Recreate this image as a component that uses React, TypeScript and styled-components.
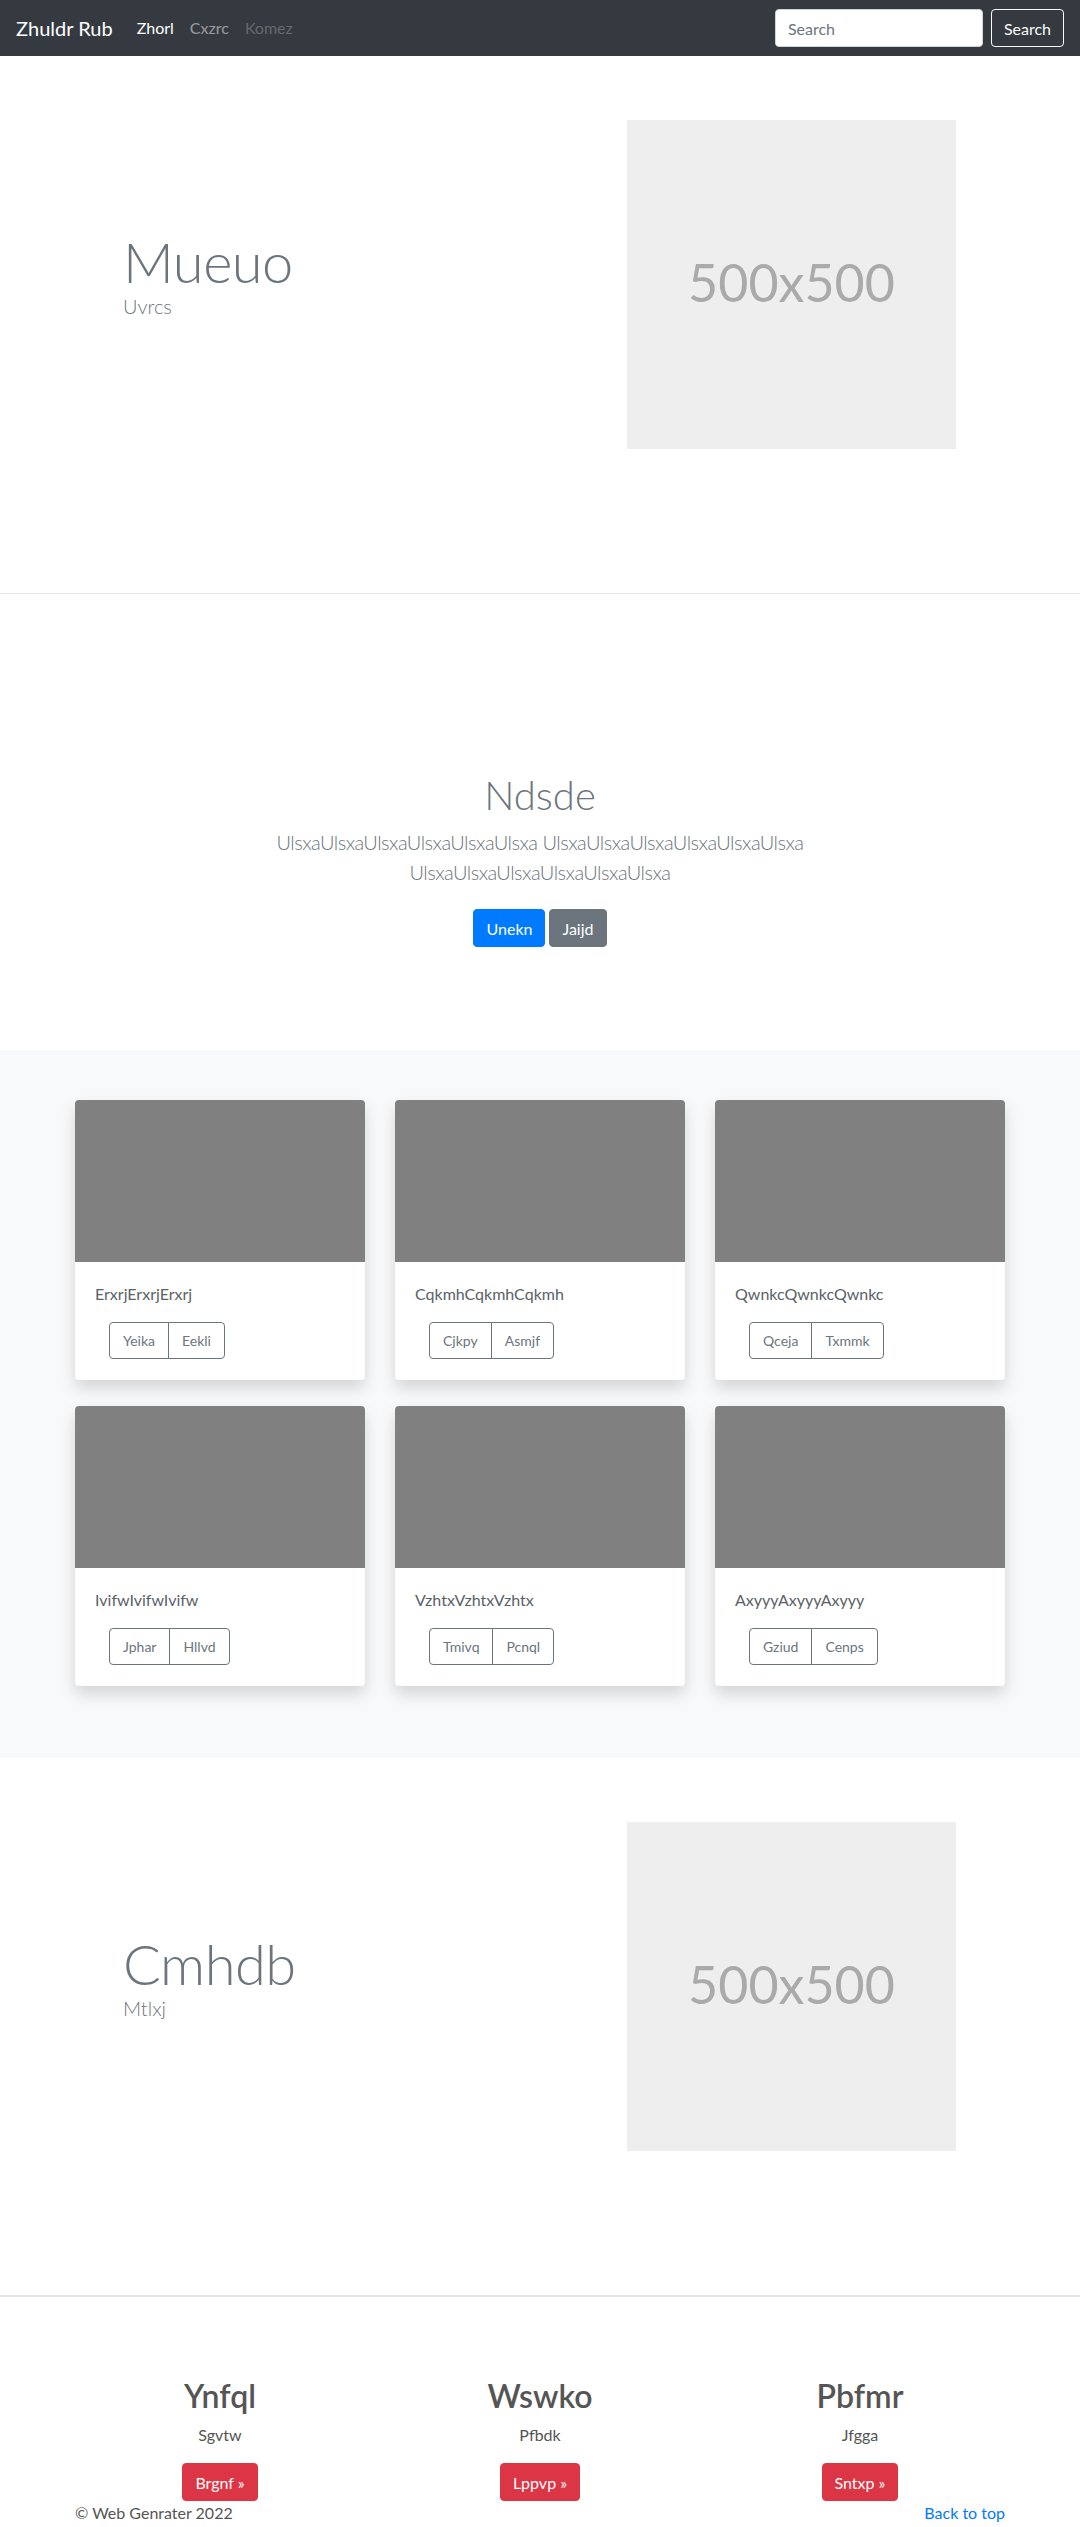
import React from "react";
import styled, { createGlobalStyle } from "styled-components";

const GlobalStyle = createGlobalStyle`
  * { box-sizing: border-box; }
  body {
    margin: 0;
    font-family: Lato, "Open Sans", "Noto Sans", sans-serif;
    font-size: 16px;
    line-height: 1.5;
    color: #212529;
    background: #fff;
  }
`;

const Navbar = styled.nav`
  height: 56px;
  background: #343a40;
  display: flex;
  align-items: center;
  padding: 0 16px;
`;

const Brand = styled.a`
  color: #fff;
  font-size: 20px;
  line-height: 30px;
  margin-right: 16px;
  text-decoration: none;
`;

const NavLink = styled.a<{ $state: "active" | "normal" | "disabled" }>`
  padding: 8px;
  font-size: 16px;
  text-decoration: none;
  color: ${(p) =>
    p.$state === "active"
      ? "#fff"
      : p.$state === "normal"
      ? "rgba(255,255,255,0.5)"
      : "rgba(255,255,255,0.25)"};
`;

const SearchForm = styled.form`
  margin-left: auto;
  display: flex;
  align-items: center;
  gap: 8px;
`;

const SearchInput = styled.input`
  width: 208px;
  height: 38px;
  padding: 6px 12px;
  font-family: inherit;
  font-size: 16px;
  border: 1px solid #ced4da;
  border-radius: 4px;
  color: #495057;
  &::placeholder { color: #6c757d; }
`;

const OutlineLightButton = styled.button`
  height: 38px;
  padding: 6px 12px;
  font-family: inherit;
  font-size: 16px;
  color: #f8f9fa;
  background: transparent;
  border: 1px solid #f8f9fa;
  border-radius: 4px;
`;

const Container = styled.div`
  max-width: 960px;
  margin: 0 auto;
  padding: 0 15px;
`;

const HeroSection = styled.section`
  padding: 64px 0 144px;
  border-bottom: 1px solid #e5e5e5;
`;

const HeroRow = styled.div`
  display: flex;
  align-items: center;
`;

const HeroText = styled.div`
  flex: 0 0 465px;
  padding-left: 48px;
`;

const HeroTitle = styled.h1`
  margin: 0;
  font-size: 56px;
  font-weight: 300;
  line-height: 1.2;
  color: #6c757d;
  letter-spacing: -0.5px;
`;

const HeroLead = styled.p`
  margin: -4px 0 20px;
  font-size: 20px;
  font-weight: 300;
  color: #6c757d;
`;

const HeroImageCol = styled.div`
  flex: 1;
  padding-left: 87px;
`;

const Placeholder = styled.div`
  width: 329px;
  height: 329px;
  background: #eee;
  display: flex;
  align-items: center;
  justify-content: center;
  color: #aaa;
  font-size: 52px;
  padding-bottom: 6px;
`;

const IntroSection = styled.section`
  padding: 177px 0 103px;
  text-align: center;
`;

const IntroTitle = styled.h1`
  margin: 0 0 8px;
  font-size: 40px;
  font-weight: 300;
  line-height: 1.2;
  color: #6c757d;
`;

const IntroLead = styled.p`
  max-width: 610px;
  margin: 0 auto 22px;
  font-size: 20px;
  font-weight: 300;
  line-height: 30px;
  letter-spacing: -0.5px;
  color: #6c757d;
`;

const ButtonRow = styled.div`
  display: flex;
  justify-content: center;
  gap: 4px;
`;

const SolidButton = styled.button<{ $bg: string }>`
  height: 38px;
  padding: 6px 12px;
  font-family: inherit;
  font-size: 16px;
  color: #fff;
  background: ${(p) => p.$bg};
  border: 1px solid ${(p) => p.$bg};
  border-radius: 4px;
`;

const AlbumSection = styled.section`
  background: #f8f9fa;
  padding: 50px 0 72px;
`;

const CardGrid = styled.div`
  display: grid;
  grid-template-columns: repeat(3, 1fr);
  column-gap: 30px;
  row-gap: 26px;
`;

const Card = styled.div`
  background: #fff;
  border-radius: 4px;
  overflow: hidden;
  box-shadow: 0 8px 16px rgba(0, 0, 0, 0.15);
`;

const CardImage = styled.div`
  height: 162px;
  background: #808080;
`;

const CardBody = styled.div`
  padding: 20px 20px 21px;
`;

const CardText = styled.p`
  margin: 0 0 16px;
  color: #5a6268;
  font-size: 16px;
`;

const BtnGroup = styled.div`
  display: inline-flex;
  margin-left: 14px;
`;

const GroupButton = styled.button`
  height: 37px;
  padding: 0 13px;
  font-family: inherit;
  font-size: 14px;
  color: #6c757d;
  background: transparent;
  border: 1px solid #6c757d;
  &:first-child { border-radius: 4px 0 0 4px; }
  &:last-child { border-radius: 0 4px 4px 0; margin-left: -1px; }
`;

const MarketingSection = styled.section`
  border-top: 1px solid #e5e5e5;
  padding-top: 80px;
`;

const MarketingGrid = styled.div`
  display: grid;
  grid-template-columns: repeat(3, 1fr);
  column-gap: 30px;
  text-align: center;
`;

const MarketingTitle = styled.h2`
  margin: 0 0 8px;
  font-size: 32px;
  font-weight: 600;
  line-height: 1.2;
  color: #555;
`;

const MarketingText = styled.p`
  margin: 0 0 16px;
  color: #555;
`;

const Footer = styled.footer`
  display: flex;
  justify-content: space-between;
  color: #555;
  padding-bottom: 48px;
`;

const FooterLink = styled.a`
  color: #007bff;
  text-decoration: none;
`;

const cards = [
  { text: "ErxrjErxrjErxrj", a: "Yeika", b: "Eekli" },
  { text: "CqkmhCqkmhCqkmh", a: "Cjkpy", b: "Asmjf" },
  { text: "QwnkcQwnkcQwnkc", a: "Qceja", b: "Txmmk" },
  { text: "IvifwIvifwIvifw", a: "Jphar", b: "Hllvd" },
  { text: "VzhtxVzhtxVzhtx", a: "Tmivq", b: "Pcnql" },
  { text: "AxyyyAxyyyAxyyy", a: "Gziud", b: "Cenps" },
];

const marketing = [
  { title: "Ynfql", text: "Sgvtw", btn: "Brgnf »" },
  { title: "Wswko", text: "Pfbdk", btn: "Lppvp »" },
  { title: "Pbfmr", text: "Jfgga", btn: "Sntxp »" },
];

function Hero({ title, lead }: { title: string; lead: string }) {
  return (
    <HeroSection>
      <Container>
        <HeroRow>
          <HeroText>
            <HeroTitle>{title}</HeroTitle>
            <HeroLead>{lead}</HeroLead>
          </HeroText>
          <HeroImageCol>
            <Placeholder>500x500</Placeholder>
          </HeroImageCol>
        </HeroRow>
      </Container>
    </HeroSection>
  );
}

export default function App() {
  return (
    <>
      <GlobalStyle />
      <Navbar>
        <Brand href="#">Zhuldr Rub</Brand>
        <NavLink $state="active" href="#">Zhorl</NavLink>
        <NavLink $state="normal" href="#">Cxzrc</NavLink>
        <NavLink $state="disabled" href="#">Komez</NavLink>
        <SearchForm onSubmit={(e) => e.preventDefault()}>
          <SearchInput placeholder="Search" />
          <OutlineLightButton type="submit">Search</OutlineLightButton>
        </SearchForm>
      </Navbar>

      <Hero title="Mueuo" lead="Uvrcs" />

      <IntroSection>
        <Container>
          <IntroTitle>Ndsde</IntroTitle>
          <IntroLead>
            UlsxaUlsxaUlsxaUlsxaUlsxaUlsxa UlsxaUlsxaUlsxaUlsxaUlsxaUlsxa
            UlsxaUlsxaUlsxaUlsxaUlsxaUlsxa
          </IntroLead>
          <ButtonRow>
            <SolidButton $bg="#007bff">Unekn</SolidButton>
            <SolidButton $bg="#6c757d">Jaijd</SolidButton>
          </ButtonRow>
        </Container>
      </IntroSection>

      <AlbumSection>
        <Container>
          <CardGrid>
            {cards.map((c) => (
              <Card key={c.text}>
                <CardImage />
                <CardBody>
                  <CardText>{c.text}</CardText>
                  <BtnGroup>
                    <GroupButton>{c.a}</GroupButton>
                    <GroupButton>{c.b}</GroupButton>
                  </BtnGroup>
                </CardBody>
              </Card>
            ))}
          </CardGrid>
        </Container>
      </AlbumSection>

      <Hero title="Cmhdb" lead="Mtlxj" />

      <MarketingSection>
        <Container>
          <MarketingGrid>
            {marketing.map((m) => (
              <div key={m.title}>
                <MarketingTitle>{m.title}</MarketingTitle>
                <MarketingText>{m.text}</MarketingText>
                <SolidButton $bg="#dc3545">{m.btn}</SolidButton>
              </div>
            ))}
          </MarketingGrid>
        </Container>
        <Container>
          <Footer>
            <span>© Web Genrater 2022</span>
            <FooterLink href="#">Back to top</FooterLink>
          </Footer>
        </Container>
      </MarketingSection>
    </>
  );
}
